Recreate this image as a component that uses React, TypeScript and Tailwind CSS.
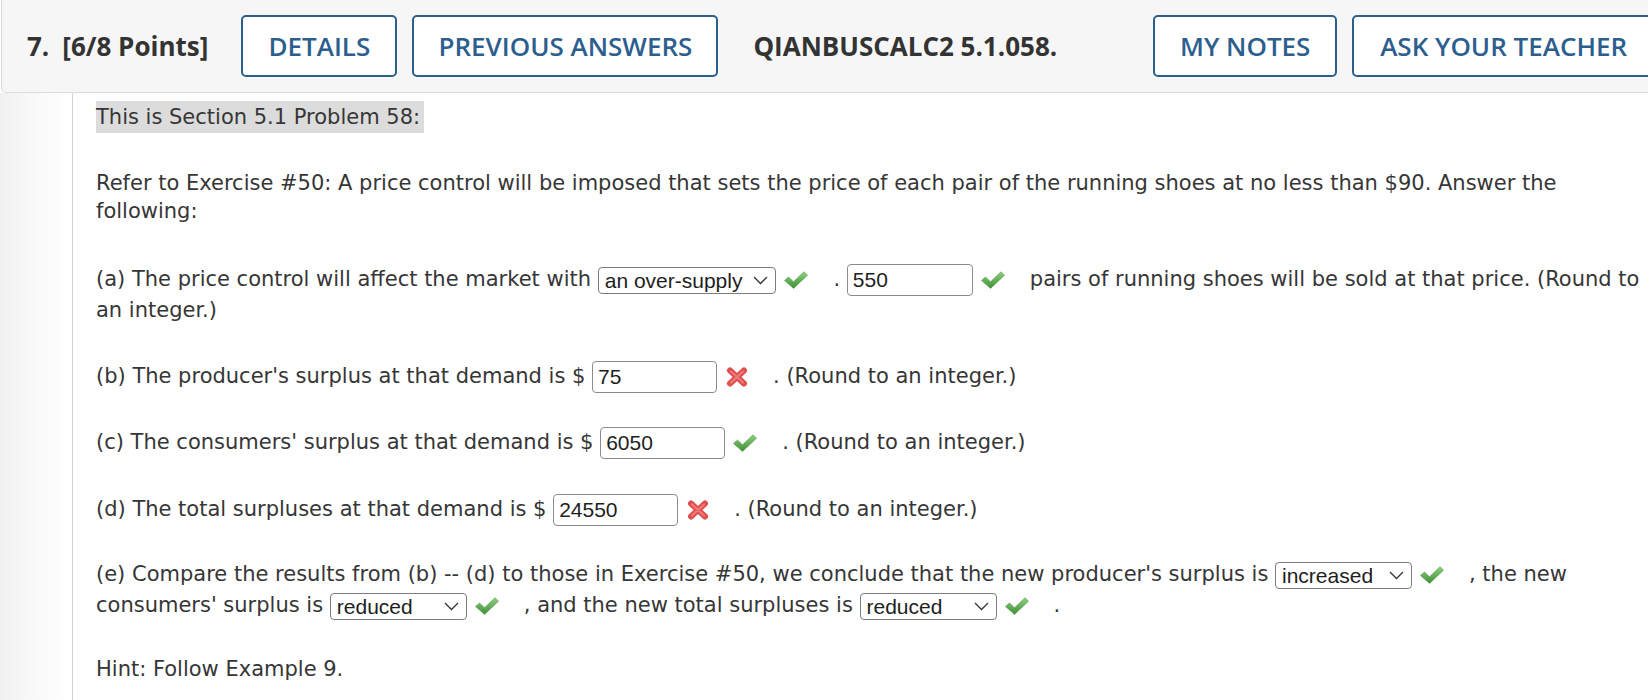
import React from "react";

function Check() {
  return (
    <span className="inline-block align-middle ml-[8px] mr-[25px] w-[24px] h-[18px] -my-[2px]">
      <svg width="24" height="18" viewBox="0 0 24 18">
        <defs>
          <linearGradient id="gck" x1="0" y1="0" x2="0" y2="1">
            <stop offset="0" stopColor="#8fd07e" />
            <stop offset="1" stopColor="#3f8f37" />
          </linearGradient>
        </defs>
        <path d="M0.5 9.5 L4.5 6 L9.5 10.8 L20 0.8 L23.5 4.2 L9.6 17.4 Z" fill="url(#gck)" stroke="#4f9a44" strokeWidth="0.6" strokeLinejoin="round" />
      </svg>
    </span>
  );
}

function Cross() {
  return (
    <span className="inline-block align-middle ml-[9px] mr-[25px] w-[22px] h-[20px] -my-[2px]">
      <svg width="22" height="20" viewBox="0 0 22 20">
        <g strokeLinecap="round">
          <path d="M4 3.5 L18 16.5 M18 3.5 L4 16.5" stroke="#e04e4e" strokeWidth="6" />
          <path d="M5 4.5 L17 15.5 M17 4.5 L5 15.5" stroke="#f07a7a" strokeWidth="2.2" />
        </g>
      </svg>
    </span>
  );
}

function Chevron() {
  return (
    <svg width="15" height="9" viewBox="0 0 15 9" className="shrink-0">
      <path d="M1 1 L7.5 7.5 L14 1" fill="none" stroke="#333" strokeWidth="1.3" />
    </svg>
  );
}

function Sel({ text, className }: { text: string; className: string }) {
  return (
    <span
      className={
        "inline-flex items-center justify-between align-middle h-[27px] -my-[2px] border border-[#7c7c7c] rounded-[4px] bg-white pl-[6px] pr-[7px] font-['Liberation_Sans',Arial,sans-serif] text-[21px] leading-[25px] text-[#1e1e1e] " +
        className
      }
    >
      <span>{text}</span>
      <Chevron />
    </span>
  );
}

function Inp({ value, className }: { value: string; className: string }) {
  return (
    <span
      className={
        "inline-block align-middle h-[32px] -my-[2px] border border-[#8c8c8c] rounded-[4px] bg-white pl-[5px] font-['Liberation_Sans',Arial,sans-serif] text-[21px] leading-[30px] text-[#1e1e1e] " +
        className
      }
    >
      {value}
    </span>
  );
}

function Btn({ label, className }: { label: string; className: string }) {
  return (
    <div
      className={
        "shrink-0 h-[62px] flex items-center border-2 border-[#2c5e8e] rounded-[5px] bg-white text-[#2c5e8e] text-[26px] font-semibold " +
        className
      }
    >
      {label}
    </div>
  );
}

export default function App() {
  return (
    <div className="w-full min-h-screen h-[700px] overflow-hidden bg-white">
      <div className="ml-[1px] w-[1700px] h-[93px] flex items-center bg-[#f6f6f6] border border-t-0 border-[#dcdcdc] rounded-bl-[5px] pl-[25px] font-['Open_Sans',sans-serif] whitespace-nowrap">
        <div className="shrink-0 text-[26px] font-bold text-[#333333]">
          7.<span className="ml-[13px]">[6/8 Points]</span>
        </div>
        <Btn label="DETAILS" className="ml-[33px] w-[156px] justify-center" />
        <Btn label="PREVIOUS ANSWERS" className="ml-[15px] w-[306px] justify-center" />
        <div className="shrink-0 ml-[35px] text-[26px] font-bold text-[#333333]">QIANBUSCALC2 5.1.058.</div>
        <Btn label="MY NOTES" className="ml-[96px] w-[184px] justify-center" />
        <Btn label="ASK YOUR TEACHER" className="ml-[15px] w-[330px] justify-start pl-[26px]" />
      </div>
      <div className="flex h-[607px]">
        <div className="w-[73px] shrink-0 bg-gradient-to-r from-[#f1f1f1] via-[#f9f9f9] to-white border-r border-[#d2d2d2]" />
        <div className="flex-1 pl-[23px] pr-0 font-['DejaVu_Sans',Verdana,sans-serif] text-[21px] text-[#363636]">
          <p className="mt-[8px] leading-[32px]">
            <span className="inline-block bg-[#dcdcdc] pr-[4px]">This is Section 5.1 Problem 58:</span>
          </p>
          <p className="mt-[36px] leading-[28px]">
            Refer to Exercise #50: A price control will be imposed that sets the price of each pair of the running shoes at no less than $90. Answer the following:
          </p>
          <p className="mt-[39px] leading-[31px]">
            (a) The price control will affect the market with <Sel text="an over-supply" className="gap-[11px]" />
            <Check />. <Inp value="550" className="w-[126px]" />
            <Check />pairs of running shoes will be sold at that price. (Round to an integer.)
          </p>
          <p className="mt-[35px] leading-[31px]">
            (b) The producer's surplus at that demand is $ <Inp value="75" className="w-[125px]" />
            <Cross />. (Round to an integer.)
          </p>
          <p className="mt-[35px] leading-[31px]">
            (c) The consumers' surplus at that demand is $ <Inp value="6050" className="w-[125px]" />
            <Check />. (Round to an integer.)
          </p>
          <p className="mt-[36px] leading-[31px]">
            (d) The total surpluses at that demand is $ <Inp value="24550" className="w-[125px]" />
            <Cross />. (Round to an integer.)
          </p>
          <p className="mt-[34px] leading-[31px]">
            (e) Compare the results from (b) -- (d) to those in Exercise #50, we conclude that the new producer's surplus is <Sel text="increased" className="w-[137px]" />
            <Check />, the new consumers' surplus is <Sel text="reduced" className="w-[137px]" />
            <Check />, and the new total surpluses is <Sel text="reduced" className="w-[137px]" />
            <Check />.
          </p>
          <p className="mt-[33px] leading-[31px]">Hint: Follow Example 9.</p>
        </div>
      </div>
    </div>
  );
}
